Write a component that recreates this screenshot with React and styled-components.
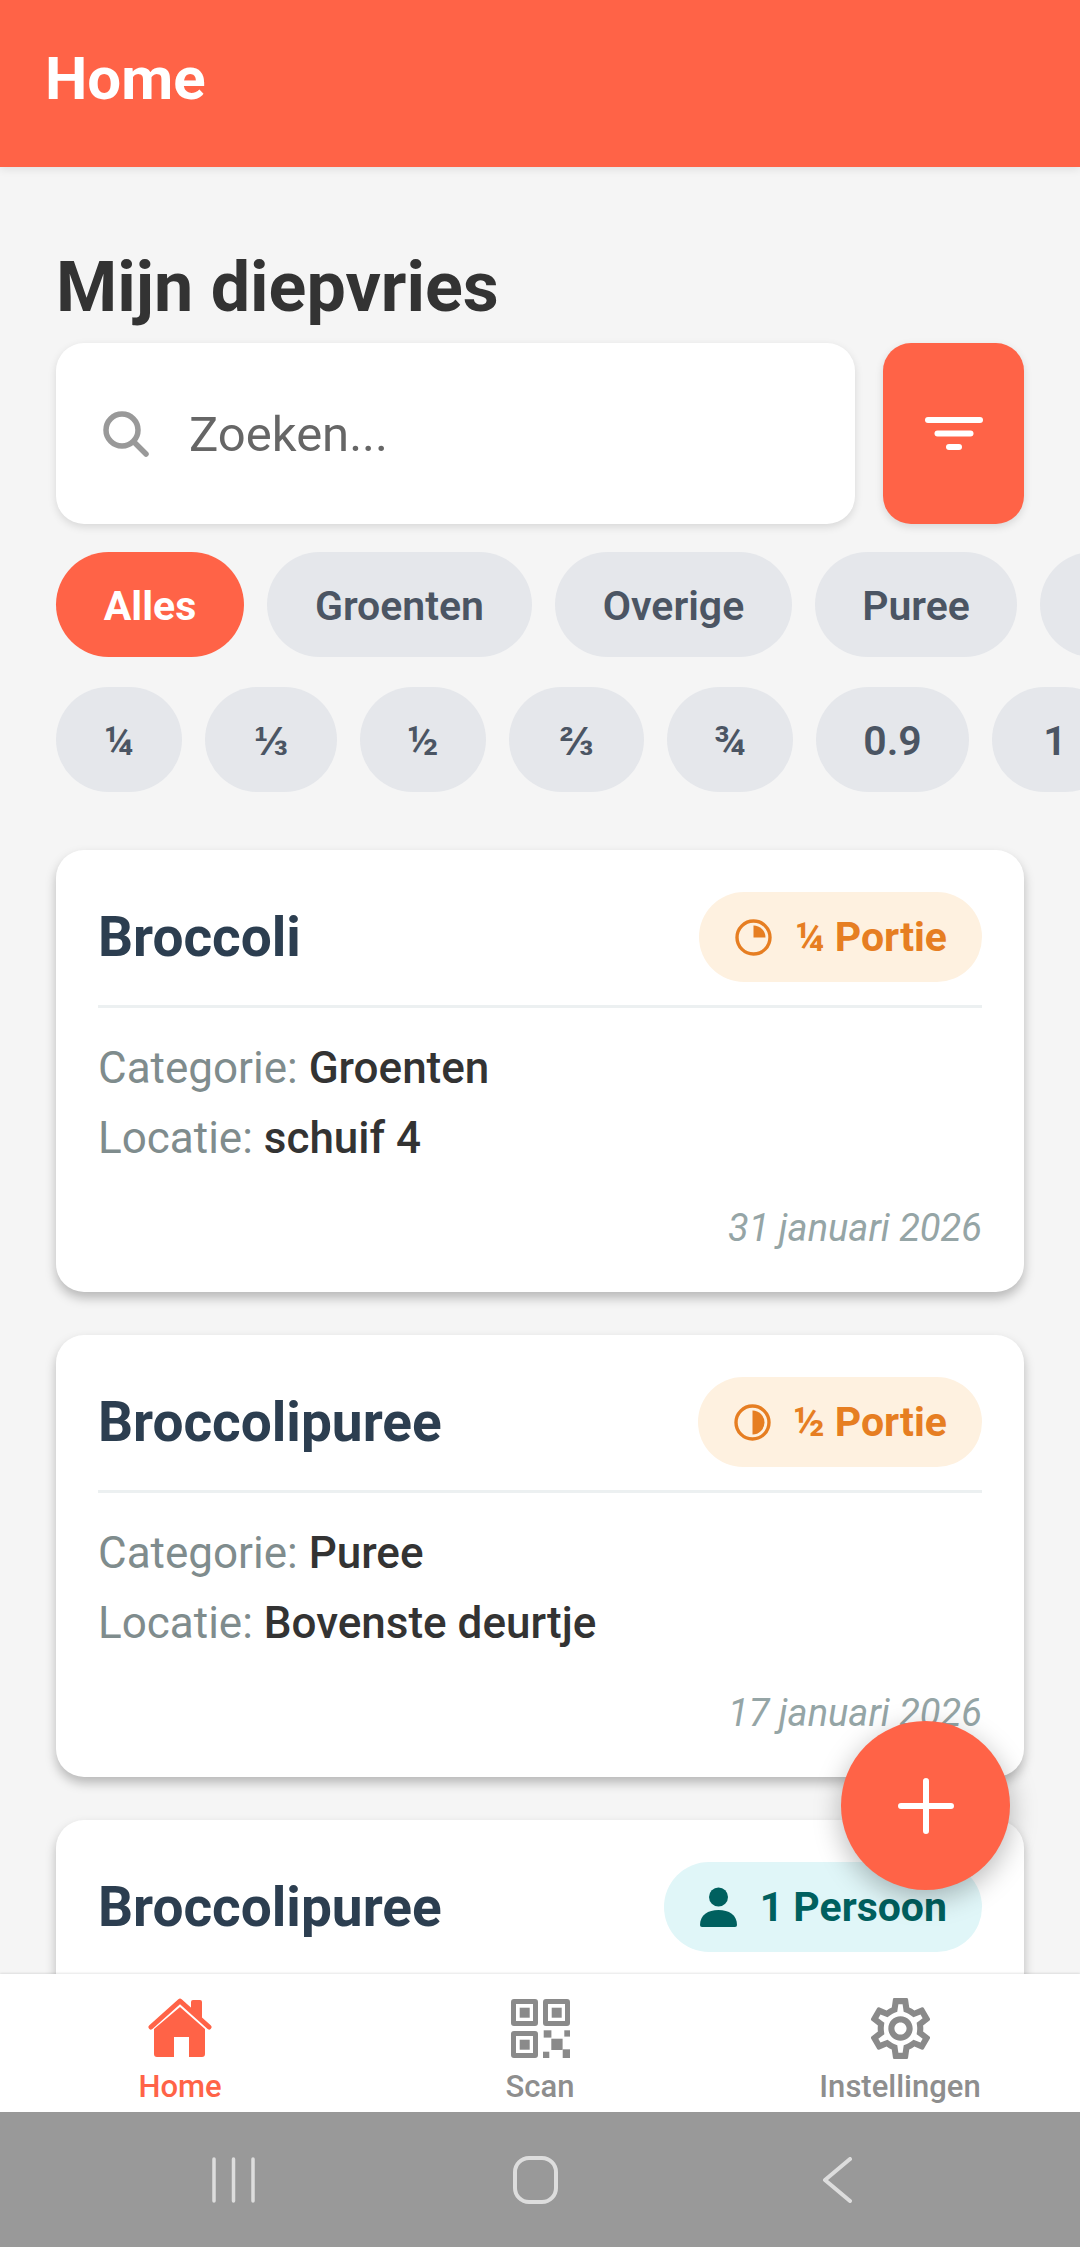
import React from 'react';
import styled, { createGlobalStyle } from 'styled-components';
import { MdOutlineSettings } from 'react-icons/md';

const Global = createGlobalStyle`
  html, body { margin: 0; padding: 0; background: #f5f5f5; }
  * { box-sizing: border-box; }
  body { font-family: Roboto, "Liberation Sans", sans-serif; }
`;

const Screen = styled.div`
  position: relative;
  width: 1080px;
  height: 2247px;
  display: flex;
  flex-direction: column;
  overflow: hidden;
  background: #f5f5f5;
`;

const Header = styled.header`
  flex: none;
  height: 167px;
  padding-left: 45px;
  display: flex;
  align-items: center;
  background: #ff6347;
  box-shadow: 0 3px 8px rgba(0, 0, 0, 0.08);
  position: relative;
  z-index: 1;
`;

const HeaderTitle = styled.h1`
  margin: 0 0 10px;
  font-size: 60px;
  font-weight: 700;
  color: #fff;
`;

const Main = styled.main`
  flex: 1;
  min-height: 0;
  overflow: hidden;
  padding: 80px 56px 0;
`;

const PageTitle = styled.h2`
  margin: 0;
  height: 96px;
  line-height: 80px;
  font-size: 70px;
  font-weight: 700;
  color: #333;
`;

const SearchRow = styled.div`
  display: flex;
  gap: 28px;
  height: 181px;
`;

const SearchBox = styled.div`
  flex: 1;
  display: flex;
  align-items: center;
  gap: 40px;
  padding-left: 47px;
  background: #fff;
  border-radius: 28px;
  box-shadow: 0 3px 8px rgba(0, 0, 0, 0.12);
`;

const Placeholder = styled.span`
  font-size: 49px;
  color: #666;
  margin-top: 2px;
`;

const FilterButton = styled.button`
  width: 141px;
  border: 0;
  padding: 0;
  display: flex;
  align-items: center;
  justify-content: center;
  background: #ff6347;
  border-radius: 28px;
  box-shadow: 0 3px 8px rgba(0, 0, 0, 0.12);
`;

const ChipRow = styled.div`
  display: flex;
  gap: 23px;
  margin-top: ${p => p.$top}px;
  width: 1200px;
`;

const Chip = styled.span`
  flex: none;
  width: ${p => p.$width}px;
  height: 105px;
  padding-top: 2px;
  display: flex;
  align-items: center;
  justify-content: center;
  border-radius: 53px;
  font-size: 41px;
  font-weight: ${p => (p.$active ? 700 : 600)};
  color: ${p => (p.$active ? '#fff' : '#4b5563')};
  background: ${p => (p.$active ? '#ff6347' : '#e5e7eb')};
`;

const CardList = styled.div`
  display: flex;
  flex-direction: column;
  gap: 43px;
  margin-top: 58px;
`;

const Card = styled.article`
  flex: none;
  height: 442px;
  padding: 42px 42px 0;
  background: #fff;
  border-radius: 28px;
  box-shadow: 0 6px 11px rgba(0, 0, 0, 0.25);
`;

const CardHead = styled.div`
  display: flex;
  align-items: center;
  justify-content: space-between;
  height: 116px;
  padding-bottom: 23px;
  border-bottom: 3px solid #ecf0f1;
`;

const CardName = styled.h3`
  margin: 0;
  font-size: 55px;
  font-weight: 700;
  color: #2c3e50;
`;

const Badge = styled.span`
  display: flex;
  align-items: center;
  gap: 23px;
  height: 90px;
  padding: 0 35px 0 36px;
  border-radius: 45px;
  font-size: 41px;
  font-weight: 700;
  color: ${p => p.$fg};
  background: ${p => p.$bg};
`;

const InfoLine = styled.p`
  margin: 0;
  height: 70px;
  line-height: 70px;
  font-size: 44px;
  color: #7f8c8d;
  &:first-of-type { margin-top: 25px; }
`;

const InfoValue = styled.span`
  font-weight: 500;
  color: #333;
`;

const DateLine = styled.div`
  margin-top: 33px;
  text-align: right;
  font-size: 38px;
  font-style: italic;
  color: #95a5a6;
`;

const Fab = styled.button`
  position: absolute;
  left: 841px;
  top: 1721px;
  width: 169px;
  height: 169px;
  padding: 0;
  border: 0;
  border-radius: 50%;
  display: flex;
  align-items: center;
  justify-content: center;
  background: #ff6347;
  box-shadow: 0 8px 28px rgba(0, 0, 0, 0.28);
  z-index: 2;
`;

const BottomNav = styled.nav`
  flex: none;
  height: 138px;
  display: grid;
  grid-template-columns: repeat(3, 1fr);
  background: #fff;
  box-shadow: 0 -1px 2px rgba(0, 0, 0, 0.1);
  position: relative;
  z-index: 1;
`;

const NavItem = styled.div`
  display: flex;
  flex-direction: column;
  align-items: center;
  padding-top: 24px;
  height: 138px;
  font-size: 31px;
  font-weight: 500;
  color: ${p => (p.$active ? '#ff6347' : '#8e8e8e')};
`;

const NavIconBox = styled.span`
  height: 60px;
  display: flex;
  align-items: center;
  justify-content: center;
`;

const NavLabel = styled.span`
  margin-top: 11px;
  line-height: 36px;
`;

const SystemBar = styled.div`
  flex: none;
  height: 135px;
  padding-left: 82px;
  display: grid;
  grid-template-columns: repeat(3, 302px);
  align-items: center;
  justify-items: center;
  background: #999;
`;

const HomeIcon = () => (
  <svg width="64" height="60" viewBox="0 0 64 60" fill="#ff6347">
    <path d="M43 13V4q0-2 2-2h7q2 0 2 2v18z" />
    <path d="M3 29 L32 3 L61 29" fill="none" stroke="#ff6347" strokeWidth="5" strokeLinecap="round" strokeLinejoin="round" />
    <path d="M32 9 L57 31 V56 q0 3-3 3 H41 V39 H26 V59 H9 q-3 0-3-3 V31 z" />
  </svg>
);

const QrIcon = () => (
  <svg width="59" height="59" viewBox="0 0 59 59" fill="#8a8a8a">
    <path fillRule="evenodd" d="M3 0h21a3 3 0 0 1 3 3v21a3 3 0 0 1-3 3H3a3 3 0 0 1-3-3V3a3 3 0 0 1 3-3zM5 5v17h17V5z" />
    <rect x="8.7" y="8.7" width="10" height="10" />
    <path fillRule="evenodd" d="M35 0h21a3 3 0 0 1 3 3v21a3 3 0 0 1-3 3H35a3 3 0 0 1-3-3V3a3 3 0 0 1 3-3zM37 5v17h17V5z" />
    <rect x="40.7" y="8.7" width="10" height="10" />
    <path fillRule="evenodd" d="M3 32h21a3 3 0 0 1 3 3v21a3 3 0 0 1-3 3H3a3 3 0 0 1-3-3V35a3 3 0 0 1 3-3zM5 37v17h17V37z" />
    <rect x="8.7" y="40.7" width="10" height="10" />
    <rect x="32.7" y="31.3" width="7.7" height="7.3" />
    <rect x="53.3" y="31.3" width="5.7" height="6.3" />
    <rect x="40.3" y="39.7" width="11.3" height="11.3" />
    <rect x="32" y="52.7" width="6.3" height="6.3" />
    <rect x="51.7" y="50.3" width="7.3" height="8.7" />
  </svg>
);

const QuarterIcon = () => (
  <svg width="37" height="37" viewBox="0 0 37 37">
    <circle cx="18.5" cy="18.5" r="16.5" fill="none" stroke="currentColor" strokeWidth="3.4" />
    <path d="M18.5 6.5a12 12 0 0 1 12 12h-12z" fill="currentColor" />
  </svg>
);

const HalfIcon = () => (
  <svg width="37" height="37" viewBox="0 0 37 37">
    <circle cx="18.5" cy="18.5" r="16.5" fill="none" stroke="currentColor" strokeWidth="3.4" />
    <path d="M18.5 6.5a12 12 0 0 1 0 24z" fill="currentColor" />
  </svg>
);

const PersonIcon = () => (
  <svg width="37" height="40" viewBox="0 0 37 40" fill="currentColor">
    <circle cx="18.5" cy="10" r="9.5" />
    <path d="M0 38c0-10 8-15 18.5-15S37 28 37 38q0 2-2 2H2q-2 0-2-2z" />
  </svg>
);

const cards = [
  { name: 'Broccoli', cat: 'Groenten', loc: 'schuif 4', date: '31 januari 2026', label: '¼ Portie', icon: <QuarterIcon />, fg: '#e67e22', bg: '#fef1e0' },
  { name: 'Broccolipuree', cat: 'Puree', loc: 'Bovenste deurtje', date: '17 januari 2026', label: '½ Portie', icon: <HalfIcon />, fg: '#e67e22', bg: '#fef1e0' },
  { name: 'Broccolipuree', cat: 'Puree', loc: 'Bovenste deurtje', date: '17 januari 2026', label: '1 Persoon', icon: <PersonIcon />, fg: '#00605f', bg: '#e0f6f8' },
];

const categories = [
  { label: 'Alles', width: 188 },
  { label: 'Groenten', width: 265 },
  { label: 'Overige', width: 237 },
  { label: 'Puree', width: 202 },
  { label: '', width: 160 },
];

const portions = [
  { label: '¼', width: 126 },
  { label: '⅓', width: 132 },
  { label: '½', width: 126 },
  { label: '⅔', width: 135 },
  { label: '¾', width: 126 },
  { label: '0.9', width: 153 },
  { label: '1', width: 126 },
];

export default function App() {
  return (
    <Screen>
      <Global />
      <Header>
        <HeaderTitle>Home</HeaderTitle>
      </Header>
      <Main>
        <PageTitle>Mijn diepvries</PageTitle>
        <SearchRow>
          <SearchBox>
            <svg width="46" height="46" viewBox="0 0 46 46" fill="none" stroke="#999" strokeWidth="5.5" strokeLinecap="round">
              <circle cx="19" cy="19" r="16" />
              <path d="M31 31 L43 43" />
            </svg>
            <Placeholder>Zoeken...</Placeholder>
          </SearchBox>
          <FilterButton aria-label="Filter">
            <svg width="58" height="33" viewBox="0 0 58 33" fill="#fff">
              <rect x="0" y="0" width="58" height="6" rx="3" />
              <rect x="9.5" y="13.5" width="39" height="6" rx="3" />
              <rect x="21" y="27" width="16" height="6" rx="3" />
            </svg>
          </FilterButton>
        </SearchRow>
        <ChipRow $top={28}>
          {categories.map((c, i) => (
            <Chip key={i} $active={i === 0} $width={c.width}>{c.label}</Chip>
          ))}
        </ChipRow>
        <ChipRow $top={30}>
          {portions.map(p => (
            <Chip key={p.label} $width={p.width}>{p.label}</Chip>
          ))}
        </ChipRow>
        <CardList>
          {cards.map((c, i) => (
            <Card key={i}>
              <CardHead>
                <CardName>{c.name}</CardName>
                <Badge $fg={c.fg} $bg={c.bg}>{c.icon}{c.label}</Badge>
              </CardHead>
              <InfoLine>Categorie: <InfoValue>{c.cat}</InfoValue></InfoLine>
              <InfoLine>Locatie: <InfoValue>{c.loc}</InfoValue></InfoLine>
              <DateLine>{c.date}</DateLine>
            </Card>
          ))}
        </CardList>
      </Main>
      <Fab aria-label="Toevoegen">
        <svg width="56" height="56" viewBox="0 0 56 56" stroke="#fff" strokeWidth="6" strokeLinecap="round">
          <path d="M28 3v50M3 28h50" />
        </svg>
      </Fab>
      <BottomNav>
        <NavItem $active><NavIconBox><HomeIcon /></NavIconBox><NavLabel>Home</NavLabel></NavItem>
        <NavItem><NavIconBox><QrIcon /></NavIconBox><NavLabel>Scan</NavLabel></NavItem>
        <NavItem><NavIconBox><MdOutlineSettings size={73} color="#8a8a8a" /></NavIconBox><NavLabel>Instellingen</NavLabel></NavItem>
      </BottomNav>
      <SystemBar>
        <svg width="43" height="46" viewBox="0 0 43 46" stroke="#ddd" strokeWidth="3.5" strokeLinecap="round">
          <path d="M2 2v42M21.5 2v42M41 2v42" />
        </svg>
        <svg width="45" height="48" viewBox="0 0 45 48" fill="none" stroke="#ddd" strokeWidth="4">
          <rect x="2" y="2" width="41" height="44" rx="14" />
        </svg>
        <svg width="30" height="46" viewBox="0 0 30 46" fill="none" stroke="#ddd" strokeWidth="4" strokeLinecap="round" strokeLinejoin="round">
          <path d="M28 2 L3 23 L28 44" />
        </svg>
      </SystemBar>
    </Screen>
  );
}
